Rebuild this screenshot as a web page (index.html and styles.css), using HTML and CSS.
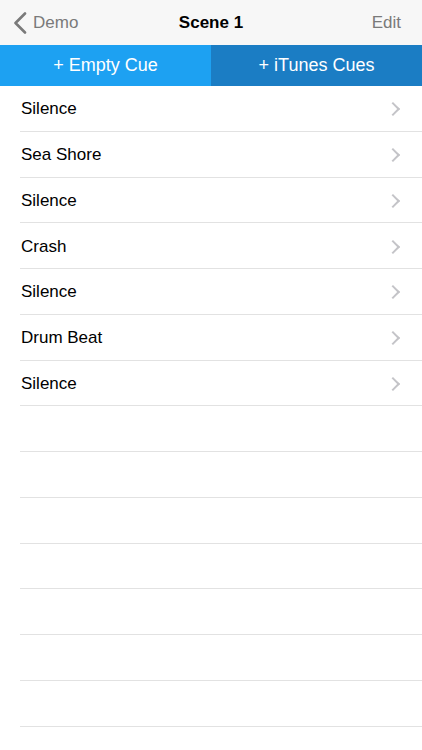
FILE: index.html
```html
<!DOCTYPE html>
<html lang="en">
  <head>
    <meta charset="UTF-8" />
    <meta name="viewport" content="width=device-width, initial-scale=1.0" />
    <title>Scene 1</title>
    <link rel="stylesheet" href="styles.css">
  </head>
  <body>
    <!-- 상단 내비게이션 -->
    <div class="nav-bar">
      <div class="nav-back">
        <svg class="back-icon" width="14" height="22" viewBox="0 0 14 22">
          <path d="M12 1.5 L2.5 11 L12 20.5" fill="none" stroke="#7a7a7a" stroke-width="2.6" stroke-linecap="round" stroke-linejoin="round" />
        </svg>
        <span>Demo</span>
      </div>
      <div class="nav-title">Scene 1</div>
      <div class="nav-edit">Edit</div>
    </div>

    <!-- 큐 추가 버튼 -->
    <div class="add-bar">
      <div class="add-button add-empty">+ Empty Cue</div>
      <div class="add-button add-itunes">+ iTunes Cues</div>
    </div>

    <!-- 큐 목록 -->
    <div class="cue-list">
      <div class="cue-row"><span>Silence</span><span class="chevron"></span></div>
      <div class="cue-row"><span>Sea Shore</span><span class="chevron"></span></div>
      <div class="cue-row"><span>Silence</span><span class="chevron"></span></div>
      <div class="cue-row"><span>Crash</span><span class="chevron"></span></div>
      <div class="cue-row"><span>Silence</span><span class="chevron"></span></div>
      <div class="cue-row"><span>Drum Beat</span><span class="chevron"></span></div>
      <div class="cue-row"><span>Silence</span><span class="chevron"></span></div>
      <div class="cue-row empty"></div>
      <div class="cue-row empty"></div>
      <div class="cue-row empty"></div>
      <div class="cue-row empty"></div>
      <div class="cue-row empty"></div>
      <div class="cue-row empty"></div>
      <div class="cue-row empty"></div>
    </div>
  </body>
</html>
```

FILE: styles.css
```css
body {
  margin: 0;
  font-family: 'Liberation Sans', Arial, sans-serif;
  background-color: #fff;
  color: #000;
  overflow: hidden;
}

/* 내비게이션 바 */
.nav-bar {
  display: flex;
  align-items: center;
  justify-content: space-between;
  height: 45px;
  padding: 0 21px 0 13px;
  background-color: #f7f7f7;
  font-size: 17px;
  position: relative;
}

.nav-back {
  display: flex;
  align-items: center;
  gap: 6px;
  color: #7a7a7a;
}

.back-icon {
  display: block;
}

.nav-title {
  position: absolute;
  left: 0;
  right: 0;
  text-align: center;
  font-weight: bold;
  pointer-events: none;
}

.nav-edit {
  color: #7a7a7a;
}

/* 추가 버튼 */
.add-bar {
  display: flex;
  height: 41px;
}

.add-button {
  flex: 1;
  display: flex;
  align-items: center;
  justify-content: center;
  color: white;
  font-size: 18px;
}

.add-empty {
  background-color: #1da1f2;
}

.add-itunes {
  background-color: #1b7dc4;
}

/* 목록 */
.cue-list {
  padding-left: 20px;
}

.cue-row {
  display: flex;
  align-items: center;
  justify-content: space-between;
  box-sizing: border-box;
  height: 45.75px;
  padding: 2px 24px 0 1px;
  border-bottom: 1px solid #e2e2e2;
  font-size: 17px;
}

.chevron {
  width: 8px;
  height: 8px;
  border-top: 2px solid #c4c4c8;
  border-right: 2px solid #c4c4c8;
  transform: rotate(45deg);
}
```
